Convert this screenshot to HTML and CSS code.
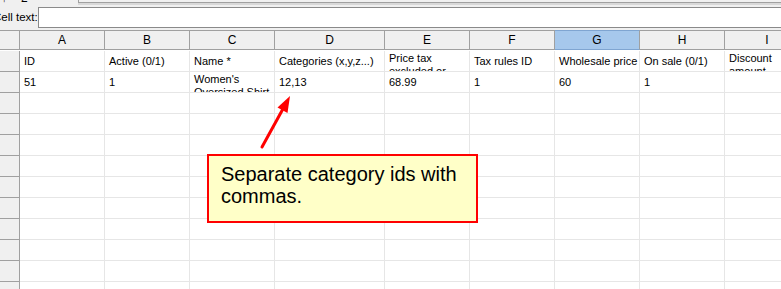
FILE: index.html
```html
<!DOCTYPE html>
<html>
<head>
<meta charset="utf-8">
<link rel="stylesheet" href="styles.css">
</head>
<body>
<div class="page">
  <div class="topstrip">
    <span class="topglyph">↑</span>
    <span class="topnum">2</span>
    <div class="toptab"></div>
  </div>
  <div class="cellbar">
    <span class="celllabel">Cell text:</span>
    <div class="cellinput"></div>
  </div>
  <div class="sheet">
    <div class="corner"></div>
    <div class="colhdr">A</div>
    <div class="colhdr">B</div>
    <div class="colhdr">C</div>
    <div class="colhdr">D</div>
    <div class="colhdr">E</div>
    <div class="colhdr">F</div>
    <div class="colhdr sel">G</div>
    <div class="colhdr">H</div>
    <div class="colhdr">I</div>

    <div class="rowhdr"></div>
    <div class="cell">ID</div>
    <div class="cell">Active (0/1)</div>
    <div class="cell">Name *</div>
    <div class="cell">Categories (x,y,z...)</div>
    <div class="cell wrap">Price tax excluded or included</div>
    <div class="cell">Tax rules ID</div>
    <div class="cell">Wholesale price</div>
    <div class="cell">On sale (0/1)</div>
    <div class="cell wrap">Discount amount</div>

    <div class="rowhdr"></div>
    <div class="cell">51</div>
    <div class="cell">1</div>
    <div class="cell wrap">Women's Oversized Shirt</div>
    <div class="cell">12,13</div>
    <div class="cell">68.99</div>
    <div class="cell">1</div>
    <div class="cell">60</div>
    <div class="cell">1</div>
    <div class="cell"></div>
  </div>
  <div class="sheet empty" id="empty"></div>

  <svg class="arrow" width="781" height="289" viewBox="0 0 781 289">
    <line x1="262" y1="147" x2="284" y2="107" stroke="#ff0000" stroke-width="3" stroke-linecap="round"/>
    <polygon points="290,96 287.5,113 277.5,107.5" fill="#ff0000"/>
  </svg>
  <div class="note">Separate category ids with commas.</div>
</div>
<script>
  var e = document.getElementById('empty');
  var h = '';
  for (var r = 0; r < 10; r++) {
    h += '<div class="rowhdr"></div>';
    for (var c = 0; c < 9; c++) h += '<div class="cell"></div>';
  }
  e.innerHTML = h;
</script>
</body>
</html>
```

FILE: styles.css
```css
html, body {
  margin: 0;
  padding: 0;
  background: #ffffff;
}
.page {
  position: relative;
  width: 781px;
  height: 289px;
  overflow: hidden;
  font-family: "Liberation Sans", Arial, sans-serif;
  font-size: 11px;
  color: #000;
}
.topstrip {
  height: 6px;
  background: #f0f0f0;
  display: flex;
  align-items: flex-start;
  overflow: hidden;
}
.topglyph {
  margin-left: 1px;
  margin-top: -8px;
  font-size: 12px;
  line-height: 12px;
}
.topnum {
  margin-left: 14px;
  margin-top: -8px;
  font-size: 12px;
  line-height: 12px;
}
.toptab {
  margin-left: 50px;
  flex: 1;
  height: 2px;
  border-left: 1px solid #a0a0a0;
  border-bottom: 1px solid #a0a0a0;
  box-shadow: 0 2px 0 #d8d8d8;
}
.cellbar {
  display: flex;
  align-items: center;
  height: 22px;
  background: #f0f0f0;
  padding-bottom: 2px;
}
.celllabel {
  margin-left: -7px;
  width: 45px;
  flex: none;
  font-family: "Liberation Sans", Arial, sans-serif;
  font-size: 11.5px;
  white-space: nowrap;
}
.cellinput {
  flex: 1;
  height: 19px;
  background: #fff;
  border: 1px solid #8a8a8a;
  border-right: none;
}
.sheet {
  display: grid;
  grid-template-columns: 20px 85px 85px 85px 110px 85px 85px 85px 85px 85px;
  grid-auto-rows: 21px;
}
.corner, .colhdr {
  height: 20px;
  box-sizing: border-box;
  background: #f0f0f0;
  border-right: 1px solid #a0a0a0;
  border-bottom: 1px solid #a0a0a0;
  border-top: 1px solid #a0a0a0;
}
.colhdr {
  display: flex;
  align-items: center;
  justify-content: center;
  font-size: 12px;
}
.colhdr.sel {
  background: #a6c8ec;
  border-color: #7fa5d1;
  border-right-color: #a0a0a0;
}
.rowhdr {
  box-sizing: border-box;
  background: #f0f0f0;
  border-right: 1px solid #a0a0a0;
  border-bottom: 1px solid #a0a0a0;
}
.cell {
  box-sizing: border-box;
  border-right: 1px solid #e6e6e6;
  border-bottom: 1px solid #e6e6e6;
  padding: 0 4px;
  display: flex;
  align-items: center;
  white-space: nowrap;
  overflow: hidden;
}
.cell.wrap {
  display: block;
  white-space: normal;
  line-height: 13px;
  padding-top: 1px;
}
.arrow {
  position: absolute;
  left: 0;
  top: 0;
  pointer-events: none;
}
.note {
  position: absolute;
  left: 207px;
  top: 154px;
  width: 271px;
  height: 69px;
  box-sizing: border-box;
  border: 2px solid #ff0000;
  background: #ffffc8;
  padding: 7px 12px 0 12px;
  font-family: "Liberation Sans", Arial, sans-serif;
  font-size: 20px;
  line-height: 22px;
  color: #000;
}
```
